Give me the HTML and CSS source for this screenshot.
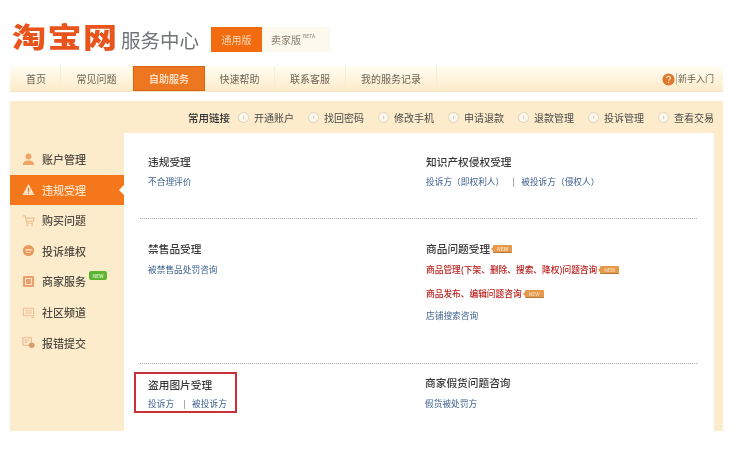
FILE: index.html
```html
<!DOCTYPE html>
<html lang="zh-CN">
<head>
<meta charset="utf-8">
<title>淘宝网服务中心</title>
<link rel="stylesheet" href="styles.css">
</head>
<body>
<div class="page">
  <header class="head">
    <div class="logo">淘宝网</div>
    <div class="sub">服务中心</div>
    <div class="tabs">
      <a class="tab on">通用版</a>
      <a class="tab">卖家版<sup class="beta">BETA</sup></a>
    </div>
  </header>
  <nav class="nav">
    <a class="ni w51">首页</a>
    <a class="ni w72">常见问题</a>
    <a class="ni w72 cur">自助服务</a>
    <a class="ni w70">快速帮助</a>
    <a class="ni w71">联系客服</a>
    <a class="ni w91">我的服务记录</a>
    <div class="help">
      <svg class="qm" width="13" height="13" viewBox="0 0 14 14"><circle cx="7" cy="7" r="6.500" fill="#e0762a"/><path d="M5 5.600C5 4.300 6 3.600 7 3.600c1.200 0 2.100.8 2.100 1.800 0 1.500-2 1.600-2 3" fill="none" stroke="#fde3c4" stroke-width="1.300"/><circle cx="7.100" cy="10.300" r=".8" fill="#fde3c4"/></svg>
      <span class="bar"></span>新手入门
    </div>
  </nav>
  <main class="main">
    <div class="quick">
      <b class="qt">常用链接</b>
      <a class="q">开通账户</a>
      <a class="q">找回密码</a>
      <a class="q">修改手机</a>
      <a class="q">申请退款</a>
      <a class="q">退款管理</a>
      <a class="q">投诉管理</a>
      <a class="q">查看交易</a>
    </div>
    <div class="body">
      <aside class="side">
        <a class="si">
          <svg class="ic" width="13" height="13" viewBox="0 0 14 14"><circle cx="7" cy="3.800" r="3.200" fill="#eda564"/><path d="M1 13c0-3.500 2.500-5 6-5s6 1.500 6 5z" fill="#eda564"/></svg>账户管理
        </a>
        <a class="si act">
          <svg class="ic" width="13" height="13" viewBox="0 0 14 14"><path d="M7 1l6.500 12H.5z" fill="#fde3c4"/><path d="M7 5v4.500M7 10.500v1.300" stroke="#f26f16" stroke-width="1.300"/></svg>违规受理
        </a>
        <a class="si">
          <svg class="ic" width="13" height="13" viewBox="0 0 14 14"><path d="M1 2h2.500l1.500 8h7M4 4.500h9l-1 3.500H4.600" fill="none" stroke="#eec193" stroke-width="1.200"/><circle cx="5.500" cy="12" r="1" fill="#eec193"/><circle cx="11" cy="12" r="1" fill="#eec193"/></svg>购买问题
        </a>
        <a class="si">
          <svg class="ic" width="13" height="13" viewBox="0 0 14 14"><circle cx="7" cy="7" r="6" fill="#e9995c"/><path d="M3.500 6.300h7" stroke="#fde9d0" stroke-width="1.400"/><path d="M4.500 8.500c1.500 1 3.500 1 5 0" fill="none" stroke="#fde9d0" stroke-width="1"/></svg>投诉维权
        </a>
        <a class="si">
          <svg class="ic" width="13" height="13" viewBox="0 0 14 14"><rect x="1" y="1" width="12" height="12" rx="1.500" fill="#e9a06a"/><rect x="3.800" y="3.800" width="6.400" height="6.400" fill="none" stroke="#fce6cc" stroke-width="1"/></svg>商家服务<span class="fresh">NEW</span>
        </a>
        <a class="si">
          <svg class="ic" width="13" height="13" viewBox="0 0 14 14"><path d="M1.500 2.500h11v8h-11zM3.500 5h7M3.500 7.500h7M10 12.500h3" fill="none" stroke="#efbd90" stroke-width="1.100"/></svg>社区频道
        </a>
        <a class="si">
          <svg class="ic" width="13" height="13" viewBox="0 0 14 14"><path d="M1 2h9v8H1zM2.800 4.500h5M2.800 6.800h3" fill="none" stroke="#e9b78a" stroke-width="1.100"/><circle cx="10.500" cy="10" r="3" fill="#d99a68"/></svg>报错提交
        </a>
      </aside>
      <section class="content">
        <div class="row r1">
          <div class="cell">
            <h3 class="t">违规受理</h3>
            <p class="l"><a class="blue">不合理评价</a></p>
          </div>
          <div class="cell">
            <h3 class="t">知识产权侵权受理</h3>
            <p class="l"><a class="blue">投诉方（即权利人）</a><i class="sep"></i><a class="blue">被投诉方（侵权人）</a></p>
          </div>
        </div>
        <div class="rule"></div>
        <div class="row r2">
          <div class="cell">
            <h3 class="t">禁售品受理</h3>
            <p class="l"><a class="blue">被禁售品处罚咨询</a></p>
          </div>
          <div class="cell">
            <h3 class="t">商品问题受理<span class="tag">NEW</span></h3>
            <p class="l"><a class="red">商品管理(下架、删除、搜索、降权)问题咨询</a><span class="tag">NEW</span></p>
            <p class="l gap"><a class="red">商品发布、编辑问题咨询</a><span class="tag">NEW</span></p>
            <p class="l gap2"><a class="blue">店铺搜索咨询</a></p>
          </div>
        </div>
        <div class="rule"></div>
        <div class="row r3">
          <div class="cell boxed">
            <h3 class="t">盗用图片受理</h3>
            <p class="l"><a class="blue">投诉方</a><i class="sep s2"></i><a class="blue">被投诉方</a></p>
          </div>
          <div class="cell">
            <h3 class="t">商家假货问题咨询</h3>
            <p class="l"><a class="blue">假货被处罚方</a></p>
          </div>
        </div>
      </section>
    </div>
  </main>
</div>
</body>
</html>
```

FILE: styles.css
```css
* { box-sizing: border-box; }
html, body { margin: 0; padding: 0; background: #fff; }
body { font-family: "Noto Sans CJK SC", "Liberation Sans", sans-serif; width: 748px; height: 450px; overflow: hidden; color: #333; }
h3, p { margin: 0; font-weight: 400; }

.page { padding: 0 25px 0 10px; filter: blur(.3px); }

.head { height: 66px; display: flex; align-items: flex-start; padding-left: 2px; }
.logo { margin-top: 12px; font-size: 34px; letter-spacing: 1.500px; line-height: 50px; height: 50px; width: 109px; font-weight: 900; color: #e8541c; white-space: nowrap; transform: scaleY(.82); }
.sub { margin-top: 26px; font-size: 19.500px; line-height: 28px; color: #6f7478; white-space: nowrap; width: 90px; }
.tabs { display: flex; margin-top: 27px; height: 25px; }
.tab { display: block; font-size: 10px; line-height: 25px; text-align: center; white-space: nowrap; color: #8a7f70; background: #fdf9ef; width: 68px; padding-right: 6px; }
.tab.on { background: #f26b0f; color: #fbd9b8; width: 51px; padding-right: 0; }
.beta { font-size: 5px; line-height: 1; vertical-align: 6px; margin-left: 2px; }

.nav { display: flex; height: 26px; background: linear-gradient(#fffdf4, #fdebc8); border-bottom: 1px solid #f6e4c2; }
.ni { display: block; font-size: 10px; line-height: 25px; text-align: center; color: #6d6458; border-right: 1px solid #f8ecd3; }
.w51 { width: 51px; padding-left: 2px; } .w72 { width: 72px; } .w70 { width: 70px; } .w71 { width: 71px; } .w91 { width: 91px; }
.cur { background: #ed7620; color: #fcdcbc; border: 1px solid #d76515; font-weight: 700; line-height: 24px; }
.help { margin-left: auto; padding-right: 9px; display: flex; align-items: center; font-size: 9px; color: #6d6458; }
.qm { margin-top: 2px; }
.bar { width: 1px; height: 12px; background: #c9b79a; margin: 0 1px; }

.main { margin-top: 9px; height: 330px; background: #fdeccb; display: flex; flex-direction: column; }
.quick { height: 32px; display: flex; align-items: center; justify-content: flex-end; gap: 14px; font-size: 10px; color: #4a4a4a; padding-right: 9px; }
.qt { font-size: 10.500px; font-weight: 500; color: #333; margin-right: -6px; }
.q { display: flex; align-items: center; white-space: nowrap; }
.q::before { content: "›"; width: 9px; height: 9px; margin-right: 5px; flex: none; border-radius: 50%; background: #fdf8ee; border: 1px solid #dfd2b8; color: #a89a80; font-size: 7px; line-height: 6px; text-align: center; }

.body { flex: 1; display: flex; }
.side { width: 114px; padding-top: 11px; }
.si { display: flex; align-items: center; height: 30.700px; padding-left: 12px; font-size: 11px; color: #4f4a42; font-weight: 500; position: relative; }
.ic { margin-right: 7px; flex: none; }
.act { background: #f4771c; color: #fde2c8; width: 114px; height: 30px; }
.act::after { content: ""; position: absolute; right: 0; top: 10px; border: 5px solid transparent; border-right-color: #fff; border-left-width: 0; }
.fresh { position: absolute; left: 79px; top: 5px; width: 18px; height: 9px; border-radius: 2px; background: #5cb531; color: #e4f7d5; font-size: 5px; line-height: 9px; text-align: center; }

.content { width: 590px; background: #fff; }
.row { display: flex; padding-left: 24px; }
.r1 { height: 85px; padding-top: 21px; }
.r2 { height: 144px; padding-top: 22px; }
.r2 .l { margin-top: 5px; }
.r3 { padding-top: 8px; }
.cell { width: 278px; }
.rule { margin: 0 17px 0 16px; height: 1px; border-top: 1px dotted #a9a9a9; }
.t { font-size: 10.700px; line-height: 16px; color: #3a3a3a; display: flex; align-items: center; white-space: nowrap; font-weight: 500; }
.l { margin-top: 4px; font-size: 8.700px; line-height: 16px; display: flex; align-items: center; white-space: nowrap; }
.r2 .gap { margin-top: 8px; }
.r2 .gap2 { margin-top: 6px; }
.blue { color: #3c5f8e; }
.red { color: #b8201c; font-weight: 500; }
.sep { width: 1px; height: 9px; background: #aaa; margin: 0 7px 0 9px; }
.s2 { margin: 0 7px 0 10px; }
.tag { position: relative; display: inline-block; margin-left: 3px; width: 19px; height: 8px; border-radius: 1px; background: #e59a4b; border-bottom: 1px solid #b97a38; color: #fbe6cf; font-size: 5px; line-height: 7px; text-align: center; }
.tag::before { content: ""; position: absolute; left: -2px; top: 2px; border: 2px solid transparent; border-right-color: #e59a4b; border-left-width: 0; }
.boxed { flex: none; width: 103px; height: 41px; margin: 0 188px 0 -14px; padding: 3px 0 0 12px; border: 2px solid #c8313a; }
.boxed .l { margin-top: 3px; }
.boxed + .cell { padding-top: 3px; }
.boxed + .cell .l { margin-top: 5px; }
```
